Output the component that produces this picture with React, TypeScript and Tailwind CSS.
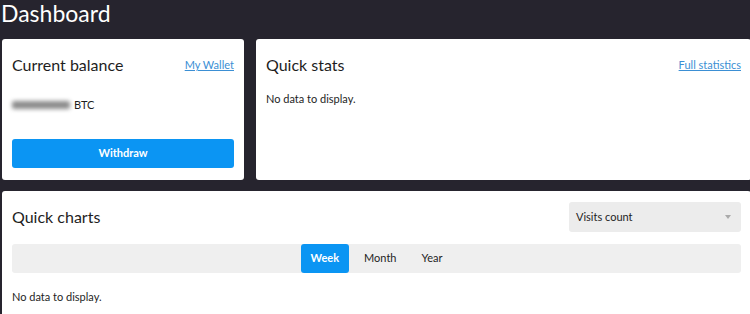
import React from 'react';

const font = { fontFamily: 'Lato, "Open Sans", sans-serif' };

const Card = ({ className, children }: { className?: string; children: React.ReactNode }) => (
  <div className={`bg-white rounded-[3px] ${className ?? ''}`}>{children}</div>
);

export default function App() {
  return (
    <div className="w-[750px] h-[314px] overflow-hidden bg-[#26242e] text-[#1e1e1e]" style={font}>
      <div className="w-[751px] pl-[2px]">
        <h1 className="h-[39px] text-[23px] leading-[26px] text-white -ml-[1px]">Dashboard</h1>

        <div className="flex gap-[12px] h-[141px]">
          <Card className="w-[242px] px-[10px]">
            <div className="pt-[16px] h-[36px] flex items-start justify-between">
              <span className="h-[20px] leading-[20px] text-[16px]">Current balance</span>
              <a className="h-[20px] leading-[20px] text-[11px] text-[#3b8fd4] underline">My Wallet</a>
            </div>
            <div className="mt-[20px] h-[20px] flex items-center gap-[4px] text-[11px]">
              <span className="w-[58px] h-[8px] bg-[#8c8c8c] blur-[2px] rounded-[2px]" />
              <span>BTC</span>
            </div>
            <button className="mt-[24px] w-full h-[29px] rounded-[3px] bg-[#0b95f3] text-white text-[11px] font-bold">
              Withdraw
            </button>
          </Card>

          <Card className="flex-1 px-[10px]">
            <div className="pt-[16px] h-[36px] flex items-start justify-between">
              <span className="h-[20px] leading-[20px] text-[16px]">Quick stats</span>
              <a className="h-[20px] leading-[20px] text-[11px] text-[#3b8fd4] underline">Full statistics</a>
            </div>
            <div className="mt-[14px] h-[20px] leading-[20px] text-[11px]">No data to display.</div>
          </Card>
        </div>

        <Card className="mt-[11px] h-[140px] px-[10px]">
          <div className="pt-[11px] h-[41px] flex items-center justify-between">
            <span className="text-[16px] -mt-[1px]">Quick charts</span>
            <div className="w-[172px] h-[30px] bg-[#ececec] rounded-[3px] flex items-center justify-between pl-[7px] pr-[10px] text-[11px]">
              <span>Visits count</span>
              <span className="w-0 h-0 border-l-[3.5px] border-r-[3.5px] border-t-[4px] border-l-transparent border-r-transparent border-t-[#aaa]" />
            </div>
          </div>
          <div className="mt-[12px] h-[29px] bg-[#efefef] rounded-[3px] flex items-center justify-center gap-[5px] text-[11px]">
            <span className="h-[29px] px-[10px] flex items-center rounded-[3px] bg-[#0b95f3] text-white font-bold">Week</span>
            <span className="h-[29px] px-[10px] flex items-center">Month</span>
            <span className="h-[29px] px-[10px] flex items-center">Year</span>
          </div>
          <div className="mt-[14px] h-[20px] leading-[20px] text-[11px]">No data to display.</div>
        </Card>
      </div>
    </div>
  );
}
